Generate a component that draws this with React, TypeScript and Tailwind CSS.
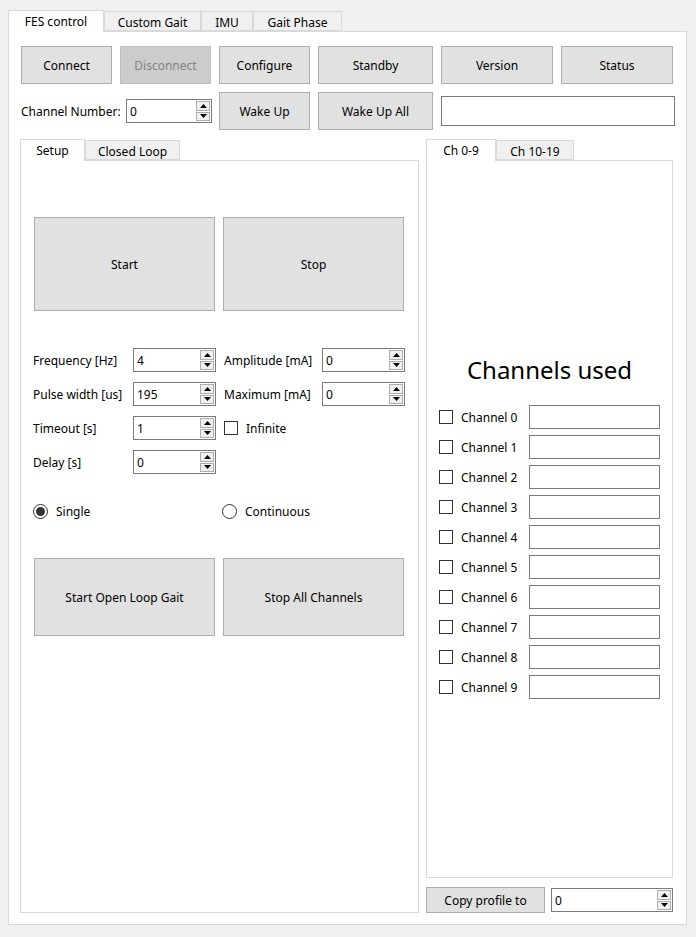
import React from 'react'

const font = { fontFamily: '"Noto Sans", "Open Sans", sans-serif' }

function Arrow({ up }: { up?: boolean }) {
  return (
    <svg width="7" height="4" viewBox="0 0 7 4">
      <polygon points={up ? '0,4 7,4 3.5,0' : '0,0 7,0 3.5,4'} fill="#000" />
    </svg>
  )
}

function Spin({ value, w }: { value: string; w: string }) {
  return (
    <div className={`flex h-[24px] ${w} border border-[#7a7a7a] bg-white`}>
      <div className="flex-1 pl-[3px] leading-[23px]">{value}</div>
      <div className="flex w-[16px] flex-col gap-[1px] p-[1px]">
        <div className="flex flex-1 items-center justify-center border border-[#adadad] bg-[#f0f0f0]"><Arrow up /></div>
        <div className="flex flex-1 items-center justify-center border border-[#adadad] bg-[#f0f0f0]"><Arrow /></div>
      </div>
    </div>
  )
}

function Btn({ label, w, h = 'h-[38px]', disabled }: { label: string; w: string; h?: string; disabled?: boolean }) {
  return (
    <button
      className={`${w} ${h} flex items-center justify-center border pt-[2px] ${disabled ? 'border-[#bfbfbf] bg-[#cccccc] text-[#838383]' : 'border-[#adadad] bg-[#e1e1e1] text-black'}`}
    >
      {label}
    </button>
  )
}

function Check() {
  return <div className="h-[14px] w-[14px] border border-[#333] bg-white" />
}

function Tab({ label, w, active }: { label: string; w: string; active?: boolean }) {
  return active ? (
    <div className={`${w} relative z-10 -mb-px flex h-[22px] items-start justify-center border border-b-0 border-[#d9d9d9] bg-white pt-[2px]`}>{label}</div>
  ) : (
    <div className={`${w} flex h-[20px] items-center justify-center border border-[#d9d9d9] bg-[#f0f0f0] pt-[3px]`}>{label}</div>
  )
}

const formRows = [
  { l: 'Frequency [Hz]', v: '4', r: 'Amplitude [mA]', rv: '0' },
  { l: 'Pulse width [us]', v: '195', r: 'Maximum [mA]', rv: '0' },
  { l: 'Timeout [s]', v: '1', check: 'Infinite' },
  { l: 'Delay [s]', v: '0' },
]

export default function App() {
  return (
    <div style={font} className="h-[937px] w-[696px] bg-[#f0f0f0] px-[8px] pt-[10px] text-[12px] text-black">
      <div className="flex items-end">
        <Tab label="FES control" w="w-[96px]" active />
        <Tab label="Custom Gait" w="w-[97px]" />
        <Tab label="IMU" w="w-[52px]" />
        <Tab label="Gait Phase" w="w-[89px]" />
      </div>

      <div className="h-[894px] w-[679px] border border-[#d9d9d9] bg-white pl-[12px] pt-[14px]">
        <div className="flex gap-[8px]">
          <Btn label="Connect" w="w-[91px]" />
          <Btn label="Disconnect" w="w-[91px]" disabled />
          <Btn label="Configure" w="w-[91px]" />
          <Btn label="Standby" w="w-[115px]" />
          <Btn label="Version" w="w-[112px]" />
          <Btn label="Status" w="w-[112px]" />
        </div>

        <div className="mt-[8px] flex items-center">
          <span className="w-[105px] pt-[1px]">Channel Number:</span>
          <Spin value="0" w="w-[86px]" />
          <div className="ml-[7px] flex gap-[8px]">
            <Btn label="Wake Up" w="w-[91px]" />
            <Btn label="Wake Up All" w="w-[115px]" />
          </div>
          <div className="ml-[8px] h-[30px] w-[234px] border border-[#7a7a7a] bg-white" />
        </div>

        <div className="-ml-px mt-[9px] flex gap-[7px]">
          {/* left tab widget */}
          <div className="w-[399px]">
            <div className="flex items-end">
              <Tab label="Setup" w="w-[65px]" active />
              <Tab label="Closed Loop" w="w-[95px]" />
            </div>
            <div className="h-[753px] border border-[#d9d9d9] bg-white pl-[13px] pt-[56px]">
              <div className="flex gap-[8px]">
                <Btn label="Start" w="w-[181px]" h="h-[94px]" />
                <Btn label="Stop" w="w-[181px]" h="h-[94px]" />
              </div>

              <div className="-ml-px mt-[37px] flex flex-col gap-[10px]">
                {formRows.map((r) => (
                  <div key={r.l} className="flex items-center">
                    <span className="w-[100px] pt-[1px]">{r.l}</span>
                    <Spin value={r.v} w="w-[83px]" />
                    {r.r && (
                      <>
                        <span className="ml-[8px] w-[98px] pt-[1px]">{r.r}</span>
                        <Spin value={r.rv!} w="w-[83px]" />
                      </>
                    )}
                    {r.check && (
                      <div className="ml-[8px] flex items-center gap-[8px]">
                        <Check />
                        <span className="pt-[1px]">{r.check}</span>
                      </div>
                    )}
                  </div>
                ))}
              </div>

              <div className="-ml-px mt-[28px] flex items-center">
                <div className="flex w-[189px] items-center gap-[8px]">
                  <div className="flex h-[15px] w-[15px] items-center justify-center rounded-full border border-[#333] bg-white">
                    <div className="h-[9px] w-[9px] rounded-full bg-[#333]" />
                  </div>
                  <span className="pt-[1px]">Single</span>
                </div>
                <div className="flex items-center gap-[8px]">
                  <div className="h-[15px] w-[15px] rounded-full border border-[#333] bg-white" />
                  <span className="pt-[1px]">Continuous</span>
                </div>
              </div>

              <div className="mt-[37px] flex gap-[8px]">
                <Btn label="Start Open Loop Gait" w="w-[181px]" h="h-[78px]" />
                <Btn label="Stop All Channels" w="w-[181px]" h="h-[78px]" />
              </div>
            </div>
          </div>

          {/* right tab widget */}
          <div className="w-[247px]">
            <div className="flex items-end">
              <Tab label="Ch 0-9" w="w-[70px]" active />
              <Tab label="Ch 10-19" w="w-[78px]" />
            </div>
            <div className="h-[718px] border border-[#d9d9d9] bg-white pl-[12px] pt-[193px]">
              <div className="pr-[12px] text-center text-[24px] leading-[32px]">Channels used</div>
              <div className="mt-[19px] flex flex-col gap-[6px]">
                {Array.from({ length: 10 }, (_, i) => (
                  <div key={i} className="flex items-center">
                    <Check />
                    <span className="ml-[8px] w-[68px] pt-[1px]">Channel {i}</span>
                    <div className="h-[24px] w-[131px] border border-[#7a7a7a] bg-white" />
                  </div>
                ))}
              </div>
            </div>
            <div className="mt-[9px] flex items-center">
              <Btn label="Copy profile to" w="w-[120px]" h="h-[26px]" />
              <div className="ml-[6px]">
                <Spin value="0" w="w-[122px]" />
              </div>
            </div>
          </div>
        </div>
      </div>
    </div>
  )
}
